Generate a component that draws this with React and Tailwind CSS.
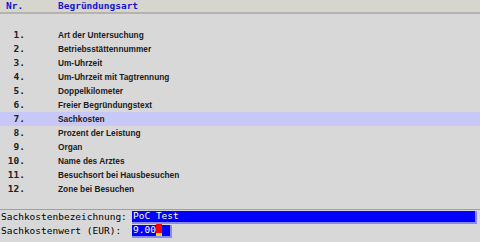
const rows = [
  "Art der Untersuchung",
  "Betriebsstättennummer",
  "Um-Uhrzeit",
  "Um-Uhrzeit mit Tagtrennung",
  "Doppelkilometer",
  "Freier Begründungstext",
  "Sachkosten",
  "Prozent der Leistung",
  "Organ",
  "Name des Arztes",
  "Besuchsort bei Hausbesuchen",
  "Zone bei Besuchen",
];

const mono = { fontFamily: '"DejaVu Sans Mono", "Liberation Mono", monospace' };

export default function App() {
  return (
    <div className="w-[480px] h-[242px] bg-[#d8d8d8] flex flex-col overflow-hidden">
      {/* header */}
      <div
        className="h-[12px] bg-[#d6d6ce] border-b-2 border-[#b4b4ac] flex items-center text-[9.5px] leading-none text-[#1414d4] font-bold box-content whitespace-nowrap"
        style={mono}
      >
        <span className="w-[58px] pl-[6px] shrink-0">Nr.</span>
        <span>Begründungsart</span>
      </div>

      {/* list */}
      <div className="flex flex-col pt-[14px] h-[195px]">
        {rows.map((text, i) => (
          <div
            key={i}
            className={`h-[14px] flex items-center whitespace-nowrap ${i === 6 ? "bg-[#c8c8f8]" : ""}`}
          >
            <span
              className="w-[25px] shrink-0 text-right text-[9.5px] font-bold text-[#202020]"
              style={mono}
            >
              {i + 1}.
            </span>
            <span
              className="pl-[33px] text-[8.3px] font-bold text-[#202020]"
              style={{ fontFamily: '"Liberation Sans", Arial, sans-serif' }}
            >
              {text}
            </span>
          </div>
        ))}
      </div>

      {/* form */}
      <div
        className="border-t border-[#a0a0a0] flex flex-col text-[9.5px] leading-none text-black whitespace-nowrap"
        style={mono}
      >
        <div className="flex items-center h-[14px]">
          <span className="w-[132px] shrink-0 pl-[1px]">Sachkostenbezeichnung:</span>
          <span className="w-[345px] h-[13px] bg-[#0000ff] text-white flex items-center pl-[1px] border-r-2 border-b-2 border-[#8888ff]">
            PoC Test
          </span>
        </div>
        <div className="flex items-center h-[14px]">
          <span className="w-[132px] shrink-0 pl-[1px]">Sachkostenwert (EUR):</span>
          <span className="w-[40px] h-[13px] bg-[#0000ff] text-white flex items-center pl-[1px] border-r-2 border-b-2 border-[#8888ff]">
            9.00
            <span className="w-[6px] h-[12px] flex flex-col">
              <span className="flex-1 bg-[#ff0000]"></span>
              <span className="h-[3px] bg-[#ffe000]"></span>
            </span>
          </span>
        </div>
      </div>
    </div>
  );
}
